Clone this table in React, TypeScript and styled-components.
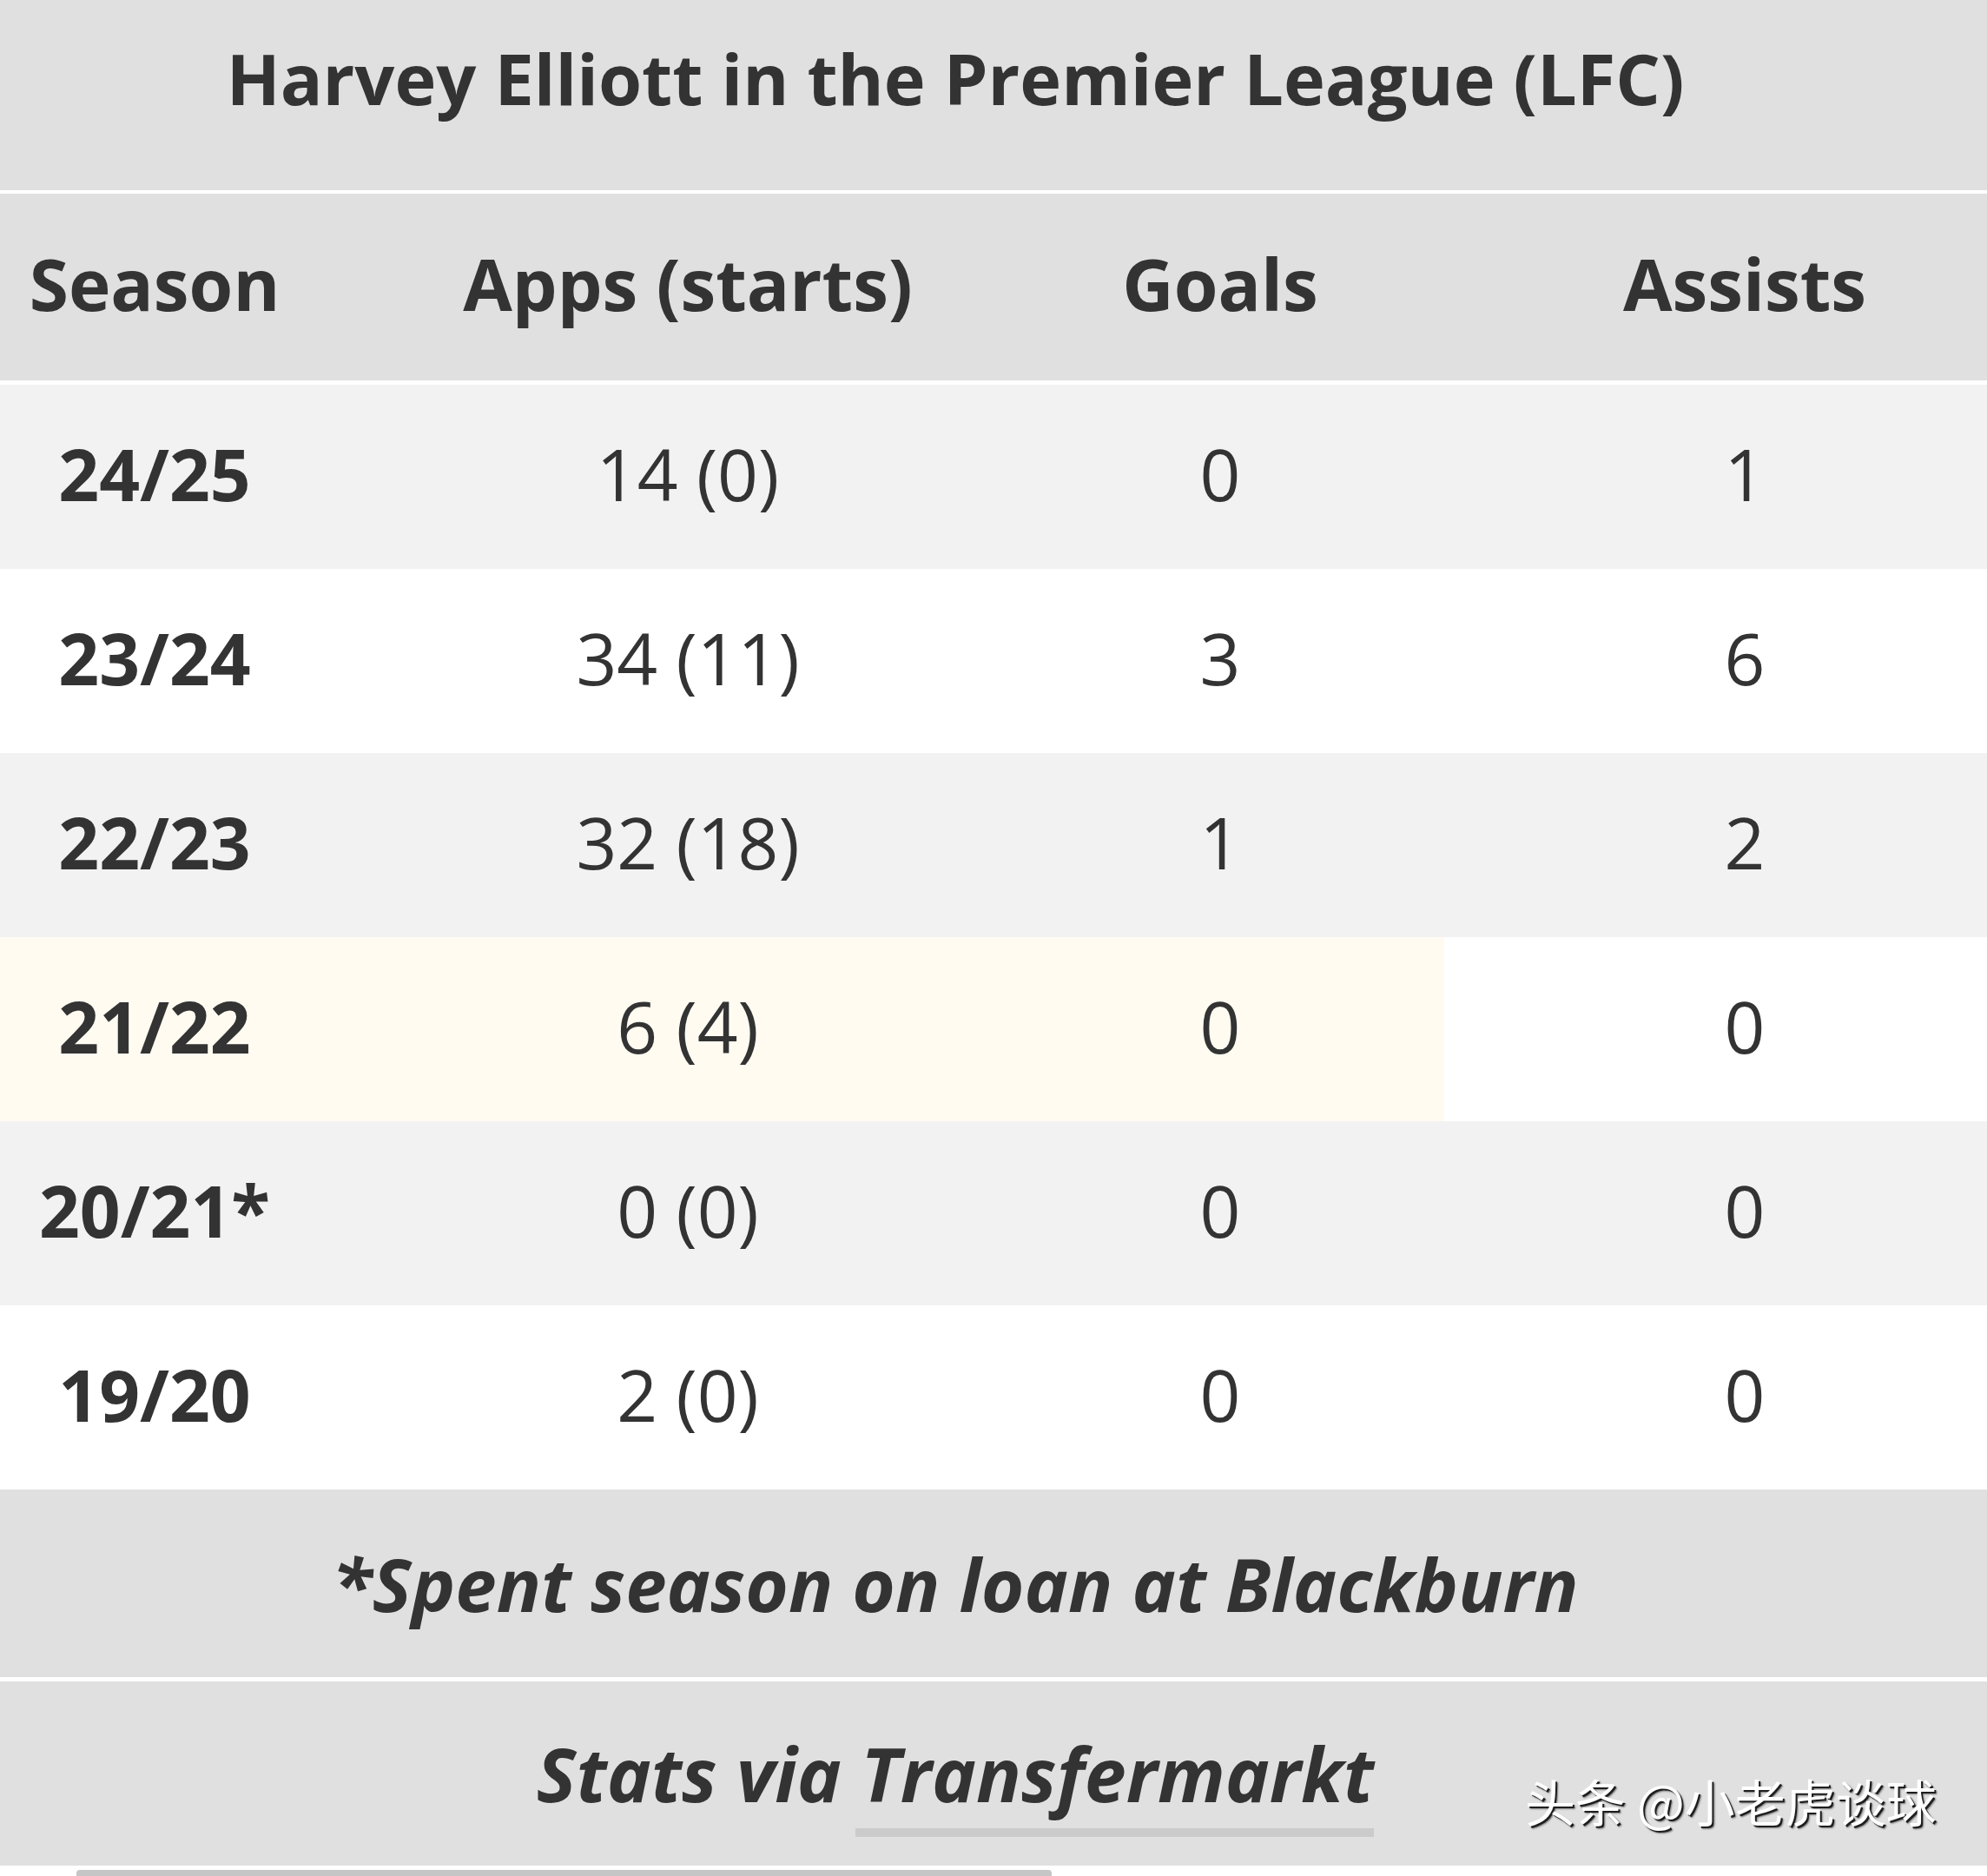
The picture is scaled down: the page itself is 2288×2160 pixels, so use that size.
import React from "react";
import styled, { createGlobalStyle } from "styled-components";

const GlobalStyle = createGlobalStyle`
  html, body {
    margin: 0;
    padding: 0;
    background: #ffffff;
  }
  body {
    width: 2288px;
    height: 2160px;
    overflow: hidden;
    font-family: "Open Sans", "Noto Sans", sans-serif;
    color: #333333;
  }
`;

const Page = styled.div`
  position: relative;
  width: 2288px;
  height: 2160px;
  display: flex;
  flex-direction: column;
  background: #ffffff;
`;

const TitleBar = styled.div`
  box-sizing: border-box;
  height: 219px;
  margin-bottom: 4px;
  padding: 0 88px 40px 0;
  display: flex;
  align-items: center;
  justify-content: center;
  background: #e0e0e0;
`;

const Title = styled.h1`
  margin: 0;
  font-size: 81px;
  line-height: 1;
  font-weight: 700;
  color: #333333;
  white-space: nowrap;
`;

const Grid = styled.div<{ $bg: string; $h: number }>`
  box-sizing: border-box;
  height: ${(p) => p.$h}px;
  display: grid;
  grid-template-columns: 356px 872px 354px 706px;
  align-items: center;
  padding-bottom: 8px;
  background: ${(p) => p.$bg};
`;

const HeaderRow = styled(Grid)`
  margin-bottom: 5px;
  padding-bottom: 10px;
`;

const Cell = styled.div<{ $bold?: boolean; $last?: boolean }>`
  text-align: center;
  font-size: 82px;
  font-weight: ${(p) => (p.$bold ? 700 : 400)};
  line-height: 1;
  white-space: nowrap;
  padding-left: ${(p) => (p.$last ? 148 : 0)}px;
`;

const NoteBar = styled.div<{ $h: number; $gap: number }>`
  box-sizing: border-box;
  height: ${(p) => p.$h}px;
  margin-bottom: ${(p) => p.$gap}px;
  padding-right: 88px;
  display: flex;
  align-items: center;
  justify-content: center;
  background: #e0e0e0;
`;

const Note = styled.p<{ $size: number }>`
  margin: 0;
  font-size: ${(p) => p.$size}px;
  line-height: 1;
  font-weight: 700;
  font-style: italic;
  color: #333333;
  white-space: nowrap;
`;

const SourceLink = styled.a`
  position: relative;
  color: inherit;
  text-decoration: none;
  &::after {
    content: "";
    position: absolute;
    left: -6px;
    right: 0;
    bottom: -15px;
    height: 10px;
    background: #cbcbcb;
  }
`;

const BottomBar = styled.div`
  width: 1123px;
  height: 7px;
  margin-left: 88px;
  background: #c6c6c6;
  border-radius: 4px 4px 0 0;
`;

const Watermark = styled.div`
  position: absolute;
  left: 1756px;
  top: 2044px;
  font-family: "Noto Sans CJK SC", "Noto Sans", sans-serif;
  font-size: 58px;
  line-height: 1;
  color: #ffffff;
  white-space: nowrap;
  text-shadow: 2px 2px 0 #1e1e1e, 3px 3px 2px rgba(0, 0, 0, 0.45);
`;

type Row = { season: string; apps: string; goals: string; assists: string; bg: string };

const rows: Row[] = [
  { season: "24/25", apps: "14 (0)", goals: "0", assists: "1", bg: "#f2f2f2" },
  { season: "23/24", apps: "34 (11)", goals: "3", assists: "6", bg: "#ffffff" },
  { season: "22/23", apps: "32 (18)", goals: "1", assists: "2", bg: "#f2f2f2" },
  {
    season: "21/22",
    apps: "6 (4)",
    goals: "0",
    assists: "0",
    bg: "linear-gradient(to right, #fffbf1 0, #fffbf1 1663px, #ffffff 1663px)",
  },
  { season: "20/21*", apps: "0 (0)", goals: "0", assists: "0", bg: "#f2f2f2" },
  { season: "19/20", apps: "2 (0)", goals: "0", assists: "0", bg: "#ffffff" },
];

export default function App() {
  return (
    <>
      <GlobalStyle />
      <Page>
        <TitleBar>
          <Title>Harvey Elliott in the Premier League (LFC)</Title>
        </TitleBar>
        <HeaderRow $bg="#e0e0e0" $h={215}>
          <Cell $bold>Season</Cell>
          <Cell $bold>Apps (starts)</Cell>
          <Cell $bold>Goals</Cell>
          <Cell $bold $last>
            Assists
          </Cell>
        </HeaderRow>
        {rows.map((r) => (
          <Grid key={r.season} $bg={r.bg} $h={212}>
            <Cell $bold>{r.season}</Cell>
            <Cell>{r.apps}</Cell>
            <Cell>{r.goals}</Cell>
            <Cell $last>{r.assists}</Cell>
          </Grid>
        ))}
        <NoteBar $h={216} $gap={5}>
          <Note $size={85}>*Spent season on loan at Blackburn</Note>
        </NoteBar>
        <NoteBar $h={212} $gap={5}>
          <Note $size={86}>
            Stats via <SourceLink href="#">Transfermarkt</SourceLink>
          </Note>
        </NoteBar>
        <BottomBar />
        <Watermark>头条 @小老虎谈球</Watermark>
      </Page>
    </>
  );
}
